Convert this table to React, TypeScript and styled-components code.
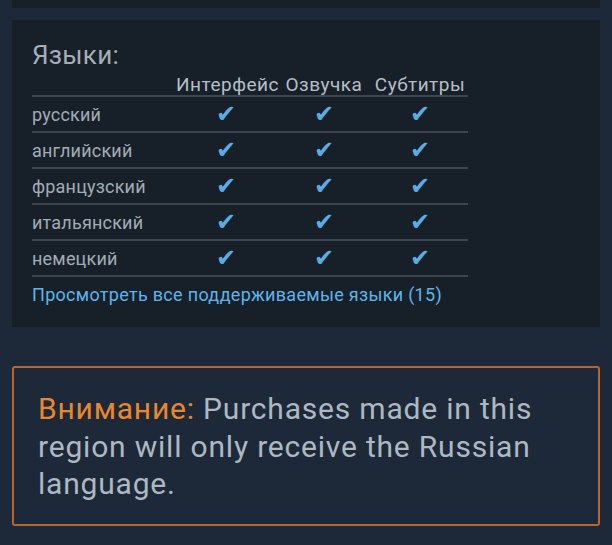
import React from 'react';
import styled, { createGlobalStyle } from 'styled-components';

const GlobalStyle = createGlobalStyle`
  html, body {
    margin: 0;
    padding: 0;
    background: #1d2938;
    font-family: Roboto, "Liberation Sans", sans-serif;
  }
`;

const Page = styled.div`
  width: 612px;
  height: 545px;
  box-sizing: border-box;
  padding: 0 12px;
  display: flex;
  flex-direction: column;
  overflow: hidden;
`;

const TopStrip = styled.div`
  height: 8px;
  background: #172029;
`;

const Panel = styled.section`
  margin-top: 12px;
  background: #172029;
  padding: 20px 20px 22px 20px;
`;

const Title = styled.h2`
  margin: 0;
  font-size: 26px;
  font-weight: 400;
  line-height: 30px;
  letter-spacing: 0.3px;
  color: #a6aeb7;
`;

const Table = styled.div`
  width: 436px;
  margin-top: 3px;
`;

const Row = styled.div<{ header?: boolean }>`
  display: grid;
  grid-template-columns: 144px 100px 96px 96px;
  align-items: center;
  height: ${p => (p.header ? '22px' : '34px')};
  border-bottom: 2px solid #3d4650;
`;

const HeadCell = styled.div`
  font-size: 19px;
  letter-spacing: 0.5px;
  color: #b6bec6;
  text-align: center;
  white-space: nowrap;
`;

const LangName = styled.div`
  font-size: 18px;
  color: #a3acb5;
  letter-spacing: 0.2px;
`;

const Check = styled.div`
  text-align: center;
  font-family: "DejaVu Sans", sans-serif;
  font-size: 24px;
  color: #5aade4;
  line-height: 1;
`;

const MoreLink = styled.a`
  display: block;
  margin-top: 7px;
  font-size: 18px;
  letter-spacing: 0.3px;
  color: #5eb4ea;
  text-decoration: none;
`;

const Notice = styled.p`
  margin: 39px 0 0 0;
  border: 2px solid #b8662e;
  border-radius: 3px;
  padding: 22px 24px 21px 24px;
  font-size: 30px;
  letter-spacing: 0.8px;
  line-height: 37.5px;
  color: #aeb8c2;
`;

const Warn = styled.span`
  color: #e9872d;
`;

const languages = ['русский', 'английский', 'французский', 'итальянский', 'немецкий'];

export default function App() {
  return (
    <>
      <GlobalStyle />
      <Page>
        <TopStrip />
        <Panel>
          <Title>Языки:</Title>
          <Table>
            <Row header>
              <div />
              <HeadCell>Интерфейс</HeadCell>
              <HeadCell>Озвучка</HeadCell>
              <HeadCell>Субтитры</HeadCell>
            </Row>
            {languages.map(lang => (
              <Row key={lang}>
                <LangName>{lang}</LangName>
                <Check>✔</Check>
                <Check>✔</Check>
                <Check>✔</Check>
              </Row>
            ))}
          </Table>
          <MoreLink href="#">Просмотреть все поддерживаемые языки (15)</MoreLink>
        </Panel>
        <Notice>
          <Warn>Внимание:</Warn> Purchases made in this region will only receive the Russian
          language.
        </Notice>
      </Page>
    </>
  );
}
